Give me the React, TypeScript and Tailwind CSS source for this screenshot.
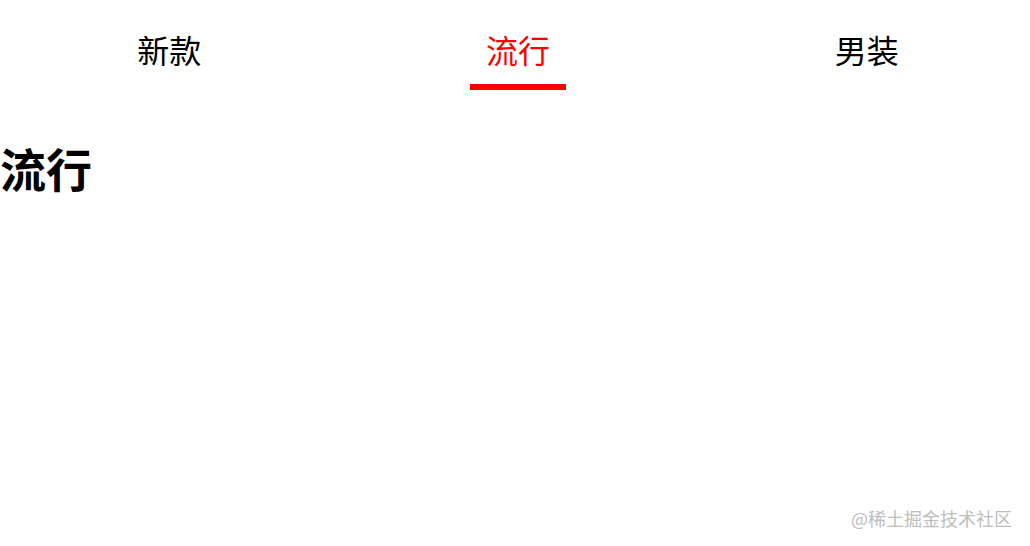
import React from "react";

const tabs = ["新款", "流行", "男装"];

export default function App() {
  const active = 1;
  return (
    <div
      className="relative w-[1030px] h-[546px] bg-white overflow-hidden"
      style={{ fontFamily: '"Noto Sans CJK SC", "Noto Sans", sans-serif' }}
    >
      <div className="flex w-[1046px] -ml-[5px]">
        {tabs.map((t, i) => (
          <div key={t} className="flex-1 flex flex-col items-center pt-[25px]">
            <div
              className={`text-[32px] leading-[48px] ${
                i === active ? "text-[#ff0000]" : "text-black"
              }`}
            >
              {t}
            </div>
            <div
              className={`mt-[11px] w-[96px] h-[6px] ${
                i === active ? "bg-[#ff0000]" : "bg-transparent"
              }`}
            />
          </div>
        ))}
      </div>
      <h1 className="mt-[41px] text-[46px] leading-[72px] font-bold text-black">
        流行
      </h1>
      <div className="absolute right-[18px] bottom-[16px] text-[18px] leading-[24px] text-[#bdbdbd]">
        @稀土掘金技术社区
      </div>
    </div>
  );
}
